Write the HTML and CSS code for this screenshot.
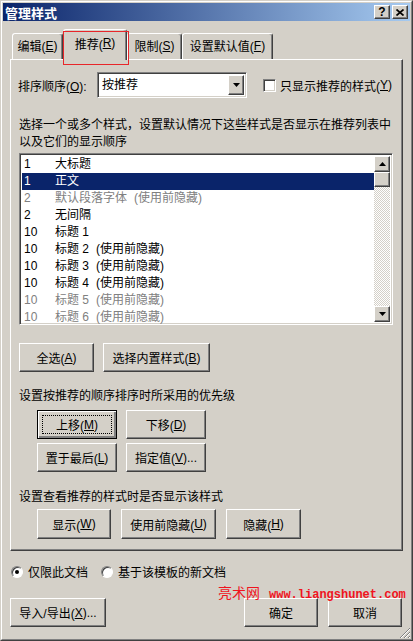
FILE: index.html
```html
<!DOCTYPE html>
<html lang="zh-CN">
<head>
    <meta charset="UTF-8">
    <title>管理样式</title>
    <link rel="stylesheet" href="styles.css">
</head>
<body>
    <div class="dialog">
        <div class="frame">
            <div class="titlebar">
                <span class="title">管理样式</span>
                <span class="tbtn">?</span>
                <span class="tbtn">
                    <svg width="8" height="7" viewBox="0 0 8 7"><path d="M0.5 0.5L7.5 6.5M7.5 0.5L0.5 6.5" stroke="#000" stroke-width="1.7"/></svg>
                </span>
            </div>

            <div class="tabs">
                <div class="tab tab-edit">编辑(<u>E</u>)</div>
                <div class="tab tab-rec sel">推荐(<u>R</u>)<span class="mark"></span></div>
                <div class="tab tab-lim">限制(<u>S</u>)</div>
                <div class="tab tab-def">设置默认值(<u>F</u>)</div>
            </div>

            <div class="panel">
                <div class="sort-row">
                    <span class="sort-label">排序顺序(<u>O</u>):</span>
                    <div class="combo">
                        <span class="combo-text">按推荐</span>
                        <span class="combo-btn">
                            <svg width="7" height="4" viewBox="0 0 7 4"><polygon points="0,0 7,0 3.5,4" fill="#000"/></svg>
                        </span>
                    </div>
                    <label class="check-opt"><span class="checkbox"></span>只显示推荐的样式(<u>Y</u>)</label>
                </div>

                <p class="desc">选择一个或多个样式，设置默认情况下这些样式是否显示在推荐列表中<br>以及它们的显示顺序</p>

                <div class="listbox">
                    <ul class="items">
                        <li><span class="num">1</span>大标题</li>
                        <li class="sel"><span class="num">1</span>正文</li>
                        <li class="dim"><span class="num">2</span>默认段落字体<span class="note">(使用前隐藏)</span></li>
                        <li><span class="num">2</span>无间隔</li>
                        <li><span class="num">10</span>标题 1</li>
                        <li><span class="num">10</span>标题 2<span class="note">(使用前隐藏)</span></li>
                        <li><span class="num">10</span>标题 3<span class="note">(使用前隐藏)</span></li>
                        <li><span class="num">10</span>标题 4<span class="note">(使用前隐藏)</span></li>
                        <li class="dim"><span class="num">10</span>标题 5<span class="note">(使用前隐藏)</span></li>
                        <li class="dim"><span class="num">10</span>标题 6<span class="note">(使用前隐藏)</span></li>
                    </ul>
                    <div class="scrollbar">
                        <span class="sb-btn">
                            <svg width="7" height="4" viewBox="0 0 7 4"><polygon points="0,4 7,4 3.5,0" fill="#000"/></svg>
                        </span>
                        <span class="sb-thumb"></span>
                        <span class="sb-track"></span>
                        <span class="sb-btn">
                            <svg width="7" height="4" viewBox="0 0 7 4"><polygon points="0,0 7,0 3.5,4" fill="#000"/></svg>
                        </span>
                    </div>
                </div>

                <div class="btn-row first">
                    <span class="btn w-all">全选(<u>A</u>)</span>
                    <span class="btn w-builtin">选择内置样式(<u>B</u>)</span>
                </div>

                <p class="section">设置按推荐的顺序排序时所采用的优先级</p>
                <div class="btn-grid">
                    <span class="btn w-move default">上移(<u>M</u>)</span>
                    <span class="btn w-move">下移(<u>D</u>)</span>
                    <span class="btn w-move">置于最后(<u>L</u>)</span>
                    <span class="btn w-move">指定值(<u>V</u>)...</span>
                </div>

                <p class="section second">设置查看推荐的样式时是否显示该样式</p>
                <div class="btn-row show">
                    <span class="btn w-show">显示(<u>W</u>)</span>
                    <span class="btn w-hide-use">使用前隐藏(<u>U</u>)</span>
                    <span class="btn w-hide">隐藏(<u>H</u>)</span>
                </div>
            </div>

            <div class="scope">
                <label class="opt"><span class="radio on"></span>仅限此文档</label>
                <label class="opt"><span class="radio"></span>基于该模板的新文档</label>
            </div>

            <div class="footer">
                <span class="btn w-import">导入/导出(<u>X</u>)...</span>
                <span class="btn w-ok ok">确定</span>
                <span class="btn w-ok">取消</span>
            </div>
        </div>

        <div class="watermark"><span class="wm-cn">亮术网</span><span class="wm-url">www.liangshunet.com</span></div>

        <svg class="grip" width="12" height="12" viewBox="0 0 12 12">
            <path d="M11 1L1 11M11 5L5 11M11 9L9 11" stroke="#808080" stroke-width="1"/>
            <path d="M11 2L2 11M11 6L6 11M11 10L10 11" stroke="#fff" stroke-width="1"/>
        </svg>
    </div>
</body>
</html>
```

FILE: styles.css
```css
* {
    box-sizing: border-box;
}

body {
    margin: 0;
    background: #d4d0c8;
    font-family: "Liberation Sans", "Noto Sans CJK SC", sans-serif;
    font-size: 12px;
    color: #000;
}

u {
    text-decoration: underline;
    text-underline-offset: 1px;
}

p {
    margin: 0;
}

/* window frame */
.dialog {
    position: relative;
    width: 413px;
    height: 641px;
    border: 1px solid;
    border-color: #d4d0c8 #404040 #404040 #d4d0c8;
}

.frame {
    height: 100%;
    border: 1px solid;
    border-color: #fff #808080 #808080 #fff;
    padding: 1px;
}

.titlebar {
    height: 18px;
    display: flex;
    align-items: center;
    padding: 0 2px;
    background: linear-gradient(to right, #0a246a, #a6caf0);
}

.title {
    flex: 1;
    color: #fff;
    font-weight: bold;
    font-size: 13px;
}

.tbtn {
    width: 16px;
    height: 14px;
    margin-left: 2px;
    display: flex;
    align-items: center;
    justify-content: center;
    background: #d4d0c8;
    border: 1px solid;
    border-color: #fff #404040 #404040 #fff;
    box-shadow: inset -1px -1px #808080;
    font-weight: bold;
    font-size: 12px;
    line-height: 1;
}

/* tabs */
.tabs {
    display: flex;
    align-items: flex-end;
    height: 30px;
    margin: 8px 0 0 9px;
}

.tab {
    height: 26px;
    display: flex;
    align-items: center;
    justify-content: center;
    padding-bottom: 2px;
    background: #d4d0c8;
    border: 1px solid;
    border-bottom: none;
    border-color: #fff #404040 transparent #fff;
    box-shadow: inset -1px 0 #808080;
    border-radius: 3px 3px 0 0;
}

.tab.sel {
    position: relative;
    z-index: 1;
    height: 31px;
    margin-bottom: -1px;
    padding-bottom: 4px;
}

.tab-edit { width: 51px; }
.tab-rec { width: 64px; }
.tab-lim { width: 55px; }
.tab-def { width: 91px; }

.mark {
    position: absolute;
    left: -1px;
    top: 1px;
    width: 66px;
    height: 34px;
    border: 1px solid #e8262a;
}

/* tab page */
.panel {
    width: 393px;
    height: 492px;
    margin-left: 7px;
    border: 1px solid;
    border-color: #fff #404040 #404040 #fff;
    box-shadow: inset -1px -1px #808080;
}

.sort-row {
    display: flex;
    align-items: center;
    height: 26px;
    margin-top: 12px;
    padding-left: 7px;
}

.sort-label {
    width: 79px;
}

.combo {
    width: 150px;
    height: 26px;
    display: flex;
    padding: 2px;
    background: #fff;
    border: 1px solid;
    border-color: #808080 #fff #fff #808080;
    box-shadow: inset 1px 1px #404040, inset -1px -1px #d4d0c8;
}

.combo-text {
    flex: 1;
    padding-left: 2px;
    line-height: 20px;
}

.combo-btn {
    width: 16px;
    display: flex;
    align-items: center;
    justify-content: center;
    background: #d4d0c8;
    border: 1px solid;
    border-color: #fff #404040 #404040 #fff;
    box-shadow: inset -1px -1px #808080;
}

.check-opt {
    display: flex;
    align-items: center;
    margin-left: 16px;
}

.checkbox {
    width: 13px;
    height: 13px;
    margin-right: 4px;
    background: #fff;
    border: 1px solid;
    border-color: #808080 #fff #fff #808080;
    box-shadow: inset 1px 1px #404040, inset -1px -1px #d4d0c8;
}

.desc {
    margin-top: 19px;
    padding-left: 8px;
    line-height: 17px;
}

/* style list */
.listbox {
    display: flex;
    width: 374px;
    height: 172px;
    margin: 2px 0 0 8px;
    background: #fff;
    border: 1px solid;
    border-color: #808080 #fff #fff #808080;
    box-shadow: inset 1px 1px #404040, inset -1px -1px #d4d0c8;
    padding: 2px 2px 2px 2px;
}

.items {
    flex: 1;
    list-style: none;
    margin: 0;
    padding: 0;
}

.items li {
    display: flex;
    height: 17px;
    line-height: 17px;
    padding-left: 2px;
    white-space: nowrap;
}

.items li.sel {
    background: #0a246a;
    color: #fff;
}

.items li.dim {
    color: #808080;
}

.num {
    width: 31px;
}

.note {
    margin-left: 7px;
}

.scrollbar {
    width: 16px;
    display: flex;
    flex-direction: column;
}

.sb-btn,
.sb-thumb {
    height: 16px;
    display: flex;
    align-items: center;
    justify-content: center;
    background: #d4d0c8;
    border: 1px solid;
    border-color: #fff #404040 #404040 #fff;
    box-shadow: inset -1px -1px #808080;
}

.sb-thumb {
    height: 15px;
}

.sb-track {
    flex: 1;
    background: repeating-conic-gradient(#d4d0c8 0 25%, #fff 0 50%) 0 0 / 2px 2px;
}

/* buttons */
.btn {
    position: relative;
    height: 29px;
    display: flex;
    align-items: center;
    justify-content: center;
    background: #d4d0c8;
    border: 1px solid;
    border-color: #fff #404040 #404040 #fff;
    box-shadow: inset -1px -1px #808080;
    white-space: nowrap;
}

.btn.default {
    border: 1px solid #000;
    box-shadow: inset 1px 1px #fff, inset -2px -2px #808080;
}

.btn.default::after {
    content: "";
    position: absolute;
    inset: 4px;
    border: 1px dotted #000;
}

.btn-row {
    display: flex;
    gap: 9px;
}

.btn-row.first {
    margin: 18px 0 0 8px;
}

.btn-row.show {
    margin: 3px 0 0 26px;
    gap: 10px;
}

.btn-row.show .btn {
    height: 30px;
}

.section {
    margin-top: 16px;
    padding-left: 8px;
    line-height: 17px;
}

.section.second {
    margin-top: 17px;
}

.btn-grid {
    display: grid;
    grid-template-columns: 80px 80px;
    gap: 4px 9px;
    margin: 5px 0 0 26px;
}

.w-all { width: 75px; }
.w-builtin { width: 107px; }
.w-move { width: 80px; }
.w-show { width: 74px; }
.w-hide-use { width: 95px; }
.w-hide { width: 75px; }
.w-import { width: 96px; }
.w-ok { width: 74px; }

/* bottom area */
.scope {
    display: flex;
    align-items: center;
    height: 17px;
    margin: 12px 0 0 8px;
}

.opt {
    display: flex;
    align-items: center;
    margin-right: 13px;
}

.radio {
    position: relative;
    width: 12px;
    height: 12px;
    margin-right: 5px;
    border-radius: 50%;
    background: #fff;
    border: 1px solid;
    border-color: #808080 #fff #fff #808080;
    box-shadow: inset 1px 1px #404040;
}

.radio.on::after {
    content: "";
    position: absolute;
    left: 3px;
    top: 3px;
    width: 4px;
    height: 4px;
    border-radius: 50%;
    background: #000;
}

.footer {
    display: flex;
    gap: 10px;
    margin-top: 18px;
    padding: 0 8px 0 7px;
}

.ok {
    margin-left: auto;
}

.watermark {
    position: absolute;
    left: 217px;
    top: 581px;
    line-height: 20px;
    color: #f0141e;
    white-space: nowrap;
}

.wm-cn {
    font-family: "Noto Sans CJK SC", sans-serif;
    font-size: 14px;
    margin-right: 9px;
}

.wm-url {
    font-family: "Liberation Mono", monospace;
    font-size: 12px;
    font-weight: bold;
}

.grip {
    position: absolute;
    right: 1px;
    bottom: 1px;
}
```
